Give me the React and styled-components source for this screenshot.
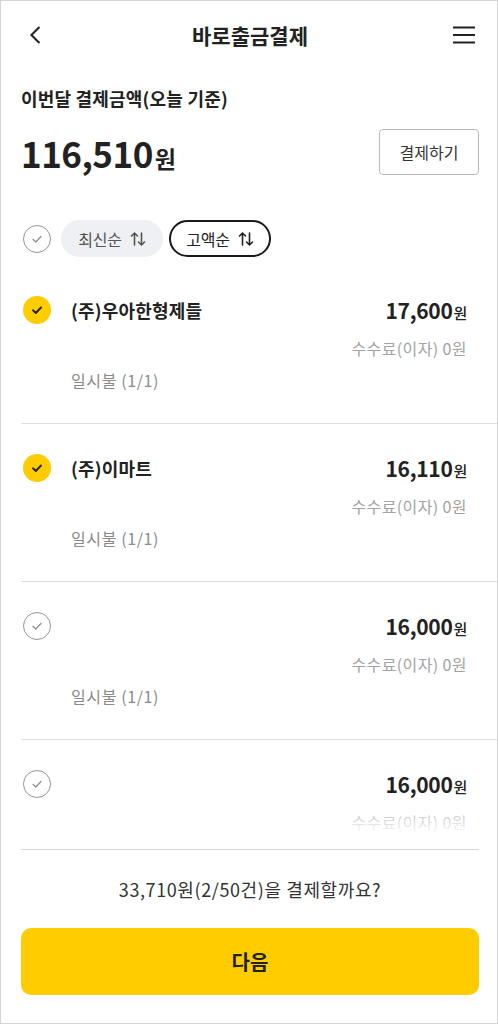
import React from 'react'
import styled, { createGlobalStyle } from 'styled-components'

const GlobalStyle = createGlobalStyle`
	html, body {
		margin: 0;
		padding: 0;
		background: #fff;
	}
	body {
		font-family: "Noto Sans CJK KR", "Noto Sans", sans-serif;
		color: #222;
	}
	* { box-sizing: border-box; }
`

const Screen = styled.div`
	width: 498px;
	height: 1024px;
	border: 1px solid #d4d4d4;
	display: flex;
	flex-direction: column;
	background: #fff;
	overflow: hidden;
`

const Header = styled.header`
	height: 68px;
	flex-shrink: 0;
	display: flex;
	align-items: center;
	justify-content: space-between;
	padding: 0 20px 0 22px;
`

const IconButton = styled.button`
	width: 26px;
	height: 26px;
	padding: 0;
	border: 0;
	background: none;
	display: flex;
	align-items: center;
	justify-content: center;
	color: #222;
`

const Title = styled.h1`
	margin: 0;
	font-size: 21px;
	font-weight: 700;
	letter-spacing: 0;
	color: #222;
`

const Summary = styled.section`
	padding: 17px 18px 0 20px;
`

const SummaryLabel = styled.div`
	font-size: 18px;
	line-height: 24px;
	font-weight: 600;
	letter-spacing: 0.2px;
`

const AmountRow = styled.div`
	margin-top: 19px;
	height: 46px;
	display: flex;
	align-items: center;
	justify-content: space-between;
`

const BigAmount = styled.div`
	font-size: 35px;
	font-weight: 700;
	letter-spacing: -0.5px;
	line-height: 1;
	span {
		font-size: 23px;
		margin-left: 2px;
	}
`

const OutlineButton = styled.button`
	width: 100px;
	height: 46px;
	border: 1px solid #b8b8b8;
	border-radius: 4px;
	background: #fff;
	font-family: inherit;
	font-size: 16px;
	color: #333;
`

const SortRow = styled.div`
	margin-top: 45px;
	padding: 0 20px 0 22px;
	display: flex;
	align-items: center;
	gap: 6px;
`

const Chip = styled.button`
	width: 102px;
	height: 37px;
	border-radius: 19px;
	display: flex;
	align-items: center;
	justify-content: center;
	gap: 8px;
	font-family: inherit;
	font-size: 16px;
	letter-spacing: -0.3px;
	background: ${p => (p.$active ? '#fff' : '#eef0f4')};
	border: ${p => (p.$active ? '2px solid #1a1a1a' : '0')};
	color: ${p => (p.$active ? '#222' : '#555')};
`

const CheckWrap = styled.span`
	width: 28px;
	height: 28px;
	flex-shrink: 0;
	border-radius: 50%;
	display: flex;
	align-items: center;
	justify-content: center;
	background: ${p => (p.$checked ? '#ffcc00' : '#fff')};
	border: ${p => (p.$checked ? '0' : '1.2px solid #959595')};
	margin-right: ${p => p.$gap || 0}px;
`

const ListArea = styled.div`
	position: relative;
	margin-top: 9px;
	height: 566px;
	overflow: hidden;
	flex-shrink: 0;
`

const Fade = styled.div`
	position: absolute;
	left: 0;
	right: 0;
	bottom: 0;
	height: 34px;
	background: linear-gradient(rgba(255, 255, 255, 0), rgba(255, 255, 255, 0.92));
	pointer-events: none;
`

const Item = styled.div`
	margin-left: 20px;
	padding: 30px 30px 32px 2px;
	border-bottom: 1px solid #dedede;
`

const ItemTop = styled.div`
	height: 28px;
	display: flex;
	align-items: center;
`

const Merchant = styled.div`
	flex: 1;
	padding-left: 20px;
	font-size: 18px;
	font-weight: 700;
	letter-spacing: 0.2px;
`

const ItemAmount = styled.div`
	font-size: 21px;
	font-weight: 700;
	letter-spacing: -0.3px;
	span {
		font-size: 15px;
		font-weight: 500;
		margin-left: 1px;
	}
`

const Fee = styled.div`
	margin-top: 13px;
	line-height: 22px;
	text-align: right;
	font-size: 16px;
	color: #a3a3a3;
	letter-spacing: 0.4px;
`

const Installment = styled.div`
	margin-top: 10px;
	padding-left: 48px;
	line-height: 22px;
	font-size: 16px;
	color: #8a8a8a;
	letter-spacing: 0.6px;
`

const Footer = styled.footer`
	margin-top: 17px;
	padding: 0 18px 0 20px;
	display: flex;
	flex-direction: column;
`

const Divider = styled.div`
	height: 1px;
	background: #d8d8d8;
`

const Question = styled.div`
	margin-top: 27px;
	text-align: center;
	font-size: 18px;
	line-height: 24px;
	color: #333;
	letter-spacing: 0.6px;
`

const PrimaryButton = styled.button`
	margin-top: 27px;
	height: 67px;
	border: 0;
	border-radius: 10px;
	background: #ffcc00;
	font-family: inherit;
	font-size: 20px;
	font-weight: 700;
	color: #222;
`

const BackIcon = () => (
	<svg width="22" height="22" viewBox="0 0 24 24" fill="none" stroke="#222" strokeWidth="2.2" strokeLinecap="square">
		<path d="M15 4 L7 12 L15 20" />
	</svg>
)

const MenuIcon = () => (
	<svg width="24" height="22" viewBox="0 0 24 22" fill="none" stroke="#222" strokeWidth="2.2">
		<path d="M1 3.5 H23 M1 11 H23 M1 18.5 H23" />
	</svg>
)

const SortIcon = () => (
	<svg width="16" height="16" viewBox="0 0 16 16" fill="none" stroke="currentColor" strokeWidth="1.6" strokeLinecap="round" strokeLinejoin="round">
		<path d="M4.5 14 V2 M1.5 5 L4.5 2 L7.5 5" />
		<path d="M11.5 2 V14 M8.5 11 L11.5 14 L14.5 11" />
	</svg>
)

const Check = ({ checked, gap }) => (
	<CheckWrap $checked={checked} $gap={gap}>
		<svg width="14" height="14" viewBox="0 0 14 14" fill="none" stroke={checked ? '#2a2200' : '#8c8c8c'} strokeWidth={checked ? 1.9 : 1.2} strokeLinecap="round" strokeLinejoin="round">
			<path d="M3 7.3 L5.8 10 L11 4.5" />
		</svg>
	</CheckWrap>
)

const items = [
	{ name: '(주)우아한형제들', amount: '17,600', checked: true },
	{ name: '(주)이마트', amount: '16,110', checked: true },
	{ name: '', amount: '16,000', checked: false },
	{ name: '', amount: '16,000', checked: false },
]

export default function App() {
	return (
		<>
			<GlobalStyle />
			<Screen>
				<Header>
					<IconButton><BackIcon /></IconButton>
					<Title>바로출금결제</Title>
					<IconButton><MenuIcon /></IconButton>
				</Header>

				<Summary>
					<SummaryLabel>이번달 결제금액(오늘 기준)</SummaryLabel>
					<AmountRow>
						<BigAmount>116,510<span>원</span></BigAmount>
						<OutlineButton>결제하기</OutlineButton>
					</AmountRow>
				</Summary>

				<SortRow>
					<Check checked={false} gap={4} />
					<Chip>최신순 <SortIcon /></Chip>
					<Chip $active>고액순 <SortIcon /></Chip>
				</SortRow>

				<ListArea>
					{items.map((it, i) => (
						<Item key={i}>
							<ItemTop>
								<Check checked={it.checked} />
								<Merchant>{it.name}</Merchant>
								<ItemAmount>{it.amount}<span>원</span></ItemAmount>
							</ItemTop>
							<Fee>수수료(이자) 0원</Fee>
							<Installment>일시불 (1/1)</Installment>
						</Item>
					))}
					<Fade />
				</ListArea>

				<Footer>
					<Divider />
					<Question>33,710원(2/50건)을 결제할까요?</Question>
					<PrimaryButton>다음</PrimaryButton>
				</Footer>
			</Screen>
		</>
	)
}
